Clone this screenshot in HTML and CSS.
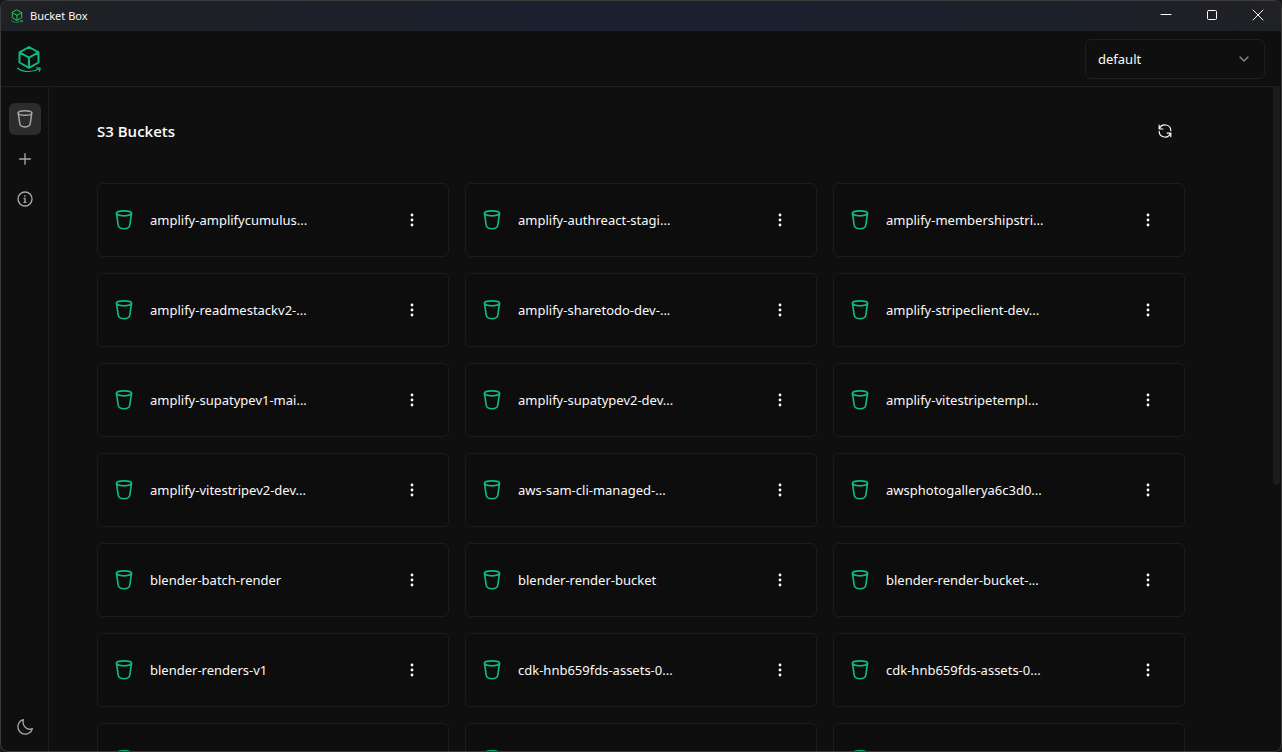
FILE: index.html
```html
<!DOCTYPE html>
<html lang="en">
<head>
<meta charset="utf-8">
<title>Bucket Box</title>
<link rel="stylesheet" href="styles.css">
</head>
<body>
<svg class="sprite" aria-hidden="true">
  <symbol id="bucket" viewBox="0 0 24 24"><ellipse cx="12" cy="4" rx="9" ry="3"/><path d="M3 4 5 18C5.400 21 8 22.500 12 22.500S18.600 21 19 18L21 4"/></symbol>
  <symbol id="cube" viewBox="0 0 26 28"><path d="M13 2 22.500 7.300V17.500L13 22.800 3.500 17.500V7.300Z M3.500 7.300 13 12.600 22.500 7.300M13 12.600V22.800"/><path class="thin" d="M1.500 23.200C7 27.500 17 27.500 23.500 23.800M20.500 22.900 24.300 23.200 23.300 26.300"/></symbol>
  <symbol id="dots" viewBox="0 0 16 16"><circle cx="8" cy="3" r="1.400"/><circle cx="8" cy="8" r="1.400"/><circle cx="8" cy="13" r="1.400"/></symbol>
</svg>
<div class="window">
  <div class="titlebar">
    <svg class="titlebar-logo"><use href="#cube"/></svg>
    <span class="titlebar-name">Bucket Box</span>
    <button class="caption" aria-label="Minimize"><svg viewBox="0 0 12 12"><path d="M1 5.500H11"/></svg></button>
    <button class="caption" aria-label="Maximize"><svg viewBox="0 0 12 12"><rect x="1.500" y="1.500" width="9" height="9" rx="1"/></svg></button>
    <button class="caption" aria-label="Close"><svg viewBox="0 0 12 12"><path d="M1 1 11 11M11 1 1 11"/></svg></button>
  </div>
  <header class="header">
    <svg class="logo"><use href="#cube"/></svg>
    <div class="profile">
      <select aria-label="Profile"><option>default</option></select>
      <svg class="chevron" viewBox="0 0 24 24"><path d="m6 9 6 6 6-6"/></svg>
    </div>
  </header>
  <div class="body">
    <nav class="sidebar">
      <button class="nav-item active" aria-label="Buckets"><svg><use href="#bucket"/></svg></button>
      <button class="nav-item" aria-label="Add"><svg viewBox="0 0 24 24"><path d="M4 12H20M12 4V20"/></svg></button>
      <button class="nav-item" aria-label="About"><svg viewBox="0 0 24 24"><circle cx="12" cy="12" r="10.500"/><path d="M10.500 11H12V17M10.500 17H13.500M12 7V8"/></svg></button>
      <button class="nav-item theme" aria-label="Theme"><svg viewBox="0 0 24 24"><path d="M9.500 1A11 11 0 1 0 23 14.500C16 17.500 7 11 9.500 1Z"/></svg></button>
    </nav>
    <main class="main">
      <div class="heading">
        <h1>S3 Buckets</h1>
        <button class="icon-button" aria-label="Refresh"><svg class="refresh" viewBox="0 0 24 24"><path d="M2 2V8.500H8.500M22 22V15.500H15.500M2.500 8.500A10 10 0 0 1 22 11.500M21.500 15.500A10 10 0 0 1 2 12.500"/></svg></button>
      </div>
      <div class="grid">
        <article class="card"><svg class="bucket"><use href="#bucket"/></svg><span class="name">amplify-amplifycumulus...</span><button class="icon-button" aria-label="Options"><svg class="dots"><use href="#dots"/></svg></button></article>
        <article class="card"><svg class="bucket"><use href="#bucket"/></svg><span class="name">amplify-authreact-stagi...</span><button class="icon-button" aria-label="Options"><svg class="dots"><use href="#dots"/></svg></button></article>
        <article class="card"><svg class="bucket"><use href="#bucket"/></svg><span class="name">amplify-membershipstri...</span><button class="icon-button" aria-label="Options"><svg class="dots"><use href="#dots"/></svg></button></article>
        <article class="card"><svg class="bucket"><use href="#bucket"/></svg><span class="name">amplify-readmestackv2-...</span><button class="icon-button" aria-label="Options"><svg class="dots"><use href="#dots"/></svg></button></article>
        <article class="card"><svg class="bucket"><use href="#bucket"/></svg><span class="name">amplify-sharetodo-dev-...</span><button class="icon-button" aria-label="Options"><svg class="dots"><use href="#dots"/></svg></button></article>
        <article class="card"><svg class="bucket"><use href="#bucket"/></svg><span class="name">amplify-stripeclient-dev...</span><button class="icon-button" aria-label="Options"><svg class="dots"><use href="#dots"/></svg></button></article>
        <article class="card"><svg class="bucket"><use href="#bucket"/></svg><span class="name">amplify-supatypev1-mai...</span><button class="icon-button" aria-label="Options"><svg class="dots"><use href="#dots"/></svg></button></article>
        <article class="card"><svg class="bucket"><use href="#bucket"/></svg><span class="name">amplify-supatypev2-dev...</span><button class="icon-button" aria-label="Options"><svg class="dots"><use href="#dots"/></svg></button></article>
        <article class="card"><svg class="bucket"><use href="#bucket"/></svg><span class="name">amplify-vitestripetempl...</span><button class="icon-button" aria-label="Options"><svg class="dots"><use href="#dots"/></svg></button></article>
        <article class="card"><svg class="bucket"><use href="#bucket"/></svg><span class="name">amplify-vitestripev2-dev...</span><button class="icon-button" aria-label="Options"><svg class="dots"><use href="#dots"/></svg></button></article>
        <article class="card"><svg class="bucket"><use href="#bucket"/></svg><span class="name">aws-sam-cli-managed-...</span><button class="icon-button" aria-label="Options"><svg class="dots"><use href="#dots"/></svg></button></article>
        <article class="card"><svg class="bucket"><use href="#bucket"/></svg><span class="name">awsphotogallerya6c3d0...</span><button class="icon-button" aria-label="Options"><svg class="dots"><use href="#dots"/></svg></button></article>
        <article class="card"><svg class="bucket"><use href="#bucket"/></svg><span class="name">blender-batch-render</span><button class="icon-button" aria-label="Options"><svg class="dots"><use href="#dots"/></svg></button></article>
        <article class="card"><svg class="bucket"><use href="#bucket"/></svg><span class="name">blender-render-bucket</span><button class="icon-button" aria-label="Options"><svg class="dots"><use href="#dots"/></svg></button></article>
        <article class="card"><svg class="bucket"><use href="#bucket"/></svg><span class="name">blender-render-bucket-...</span><button class="icon-button" aria-label="Options"><svg class="dots"><use href="#dots"/></svg></button></article>
        <article class="card"><svg class="bucket"><use href="#bucket"/></svg><span class="name">blender-renders-v1</span><button class="icon-button" aria-label="Options"><svg class="dots"><use href="#dots"/></svg></button></article>
        <article class="card"><svg class="bucket"><use href="#bucket"/></svg><span class="name">cdk-hnb659fds-assets-0...</span><button class="icon-button" aria-label="Options"><svg class="dots"><use href="#dots"/></svg></button></article>
        <article class="card"><svg class="bucket"><use href="#bucket"/></svg><span class="name">cdk-hnb659fds-assets-0...</span><button class="icon-button" aria-label="Options"><svg class="dots"><use href="#dots"/></svg></button></article>
        <article class="card"><svg class="bucket"><use href="#bucket"/></svg></article>
        <article class="card"><svg class="bucket"><use href="#bucket"/></svg></article>
        <article class="card"><svg class="bucket"><use href="#bucket"/></svg></article>
      </div>
      <div class="thumb"></div>
    </main>
  </div>
</div>
</body>
</html>
```
FILE: styles.css
```css
* { box-sizing: border-box; }
body {
  margin: 0;
  background: #191919;
  color: #fafafa;
  font: 13px/20px "Noto Sans", "Open Sans", sans-serif;
}
button {
  display: flex;
  align-items: center;
  justify-content: center;
  flex: none;
  padding: 0;
  border: 0;
  background: none;
  color: inherit;
}
svg {
  display: block;
  flex: none;
  fill: none;
  stroke: currentColor;
  stroke-width: 2;
  stroke-linecap: round;
  stroke-linejoin: round;
}
.sprite { position: absolute; width: 0; height: 0; }
.window {
  display: flex;
  flex-direction: column;
  height: 100vh;
  overflow: hidden;
  border: 1px solid #3b3b3b;
  border-radius: 8px;
  background: #0f0f0f;
}
.titlebar {
  display: flex;
  align-items: center;
  height: 30px;
  flex: none;
  padding-left: 9px;
  background: linear-gradient(90deg, #202124, #1b2030 50%, #1c202b 80%, #202124);
}
.titlebar-logo { width: 14px; height: 14px; color: #22c55e; }
.titlebar-name { flex: 1; padding-left: 6px; font-size: 11px; line-height: 16px; }
.caption { width: 46px; height: 28px; align-self: flex-start; }
.caption svg { width: 12px; height: 12px; stroke-width: 1; }
.header {
  display: flex;
  align-items: center;
  justify-content: space-between;
  flex: none;
  padding: 8px 16px 7px 15px;
  border-bottom: 1px solid #1e1e1e;
}
.logo { width: 26px; height: 28px; color: #10b981; }
.thin { stroke-width: 1.2; }
.profile { position: relative; width: 180px; }
.profile select {
  display: block;
  width: 100%;
  height: 40px;
  padding: 0 12px;
  border: 1px solid #1e1e1e;
  border-radius: 6px;
  background: #0f0f0f;
  color: inherit;
  font: inherit;
  appearance: none;
}
.chevron {
  position: absolute;
  top: 12px;
  right: 13px;
  width: 16px;
  height: 16px;
  color: #8a8a8a;
  pointer-events: none;
}
.body { display: flex; flex: 1; min-height: 0; }
.sidebar {
  display: flex;
  flex-direction: column;
  gap: 8px;
  padding: 16px 7px 8px 8px;
  border-right: 1px solid #1e1e1e;
}
.nav-item { width: 32px; height: 32px; border-radius: 6px; color: #a8a8a8; }
.nav-item svg { width: 16px; height: 16px; }
.active { background: #2c2c2c; }
.active svg { width: 18px; height: 18px; }
.theme { margin-top: auto; }
.main {
  position: relative;
  flex: 1;
  min-width: 0;
  overflow: hidden;
  padding: 24px 96px 24px 48px;
}
.heading { display: flex; align-items: center; justify-content: space-between; margin-bottom: 32px; }
h1 { margin: 0; font: 600 15px/24px "Open Sans", "Noto Sans", sans-serif; }
.icon-button { width: 40px; height: 40px; border-radius: 6px; }
.refresh { width: 14px; height: 14px; }
.grid { display: grid; grid-template-columns: repeat(3, minmax(0, 1fr)); gap: 16px; }
.card {
  display: flex;
  align-items: center;
  gap: 16px;
  min-height: 74px;
  padding: 16px;
  border: 1px solid #1c1c1c;
  border-radius: 6px;
  background: #0d0d0d;
}
.bucket { width: 20px; height: 20px; color: #10b981; }
.name { flex: 1; min-width: 0; white-space: nowrap; }
.dots { width: 16px; height: 16px; fill: currentColor; stroke: none; }
.thumb {
  position: absolute;
  top: 0;
  right: 1px;
  width: 7px;
  height: 60%;
  border-radius: 0 0 4px 4px;
  background: #1c1c1c;
}
```
